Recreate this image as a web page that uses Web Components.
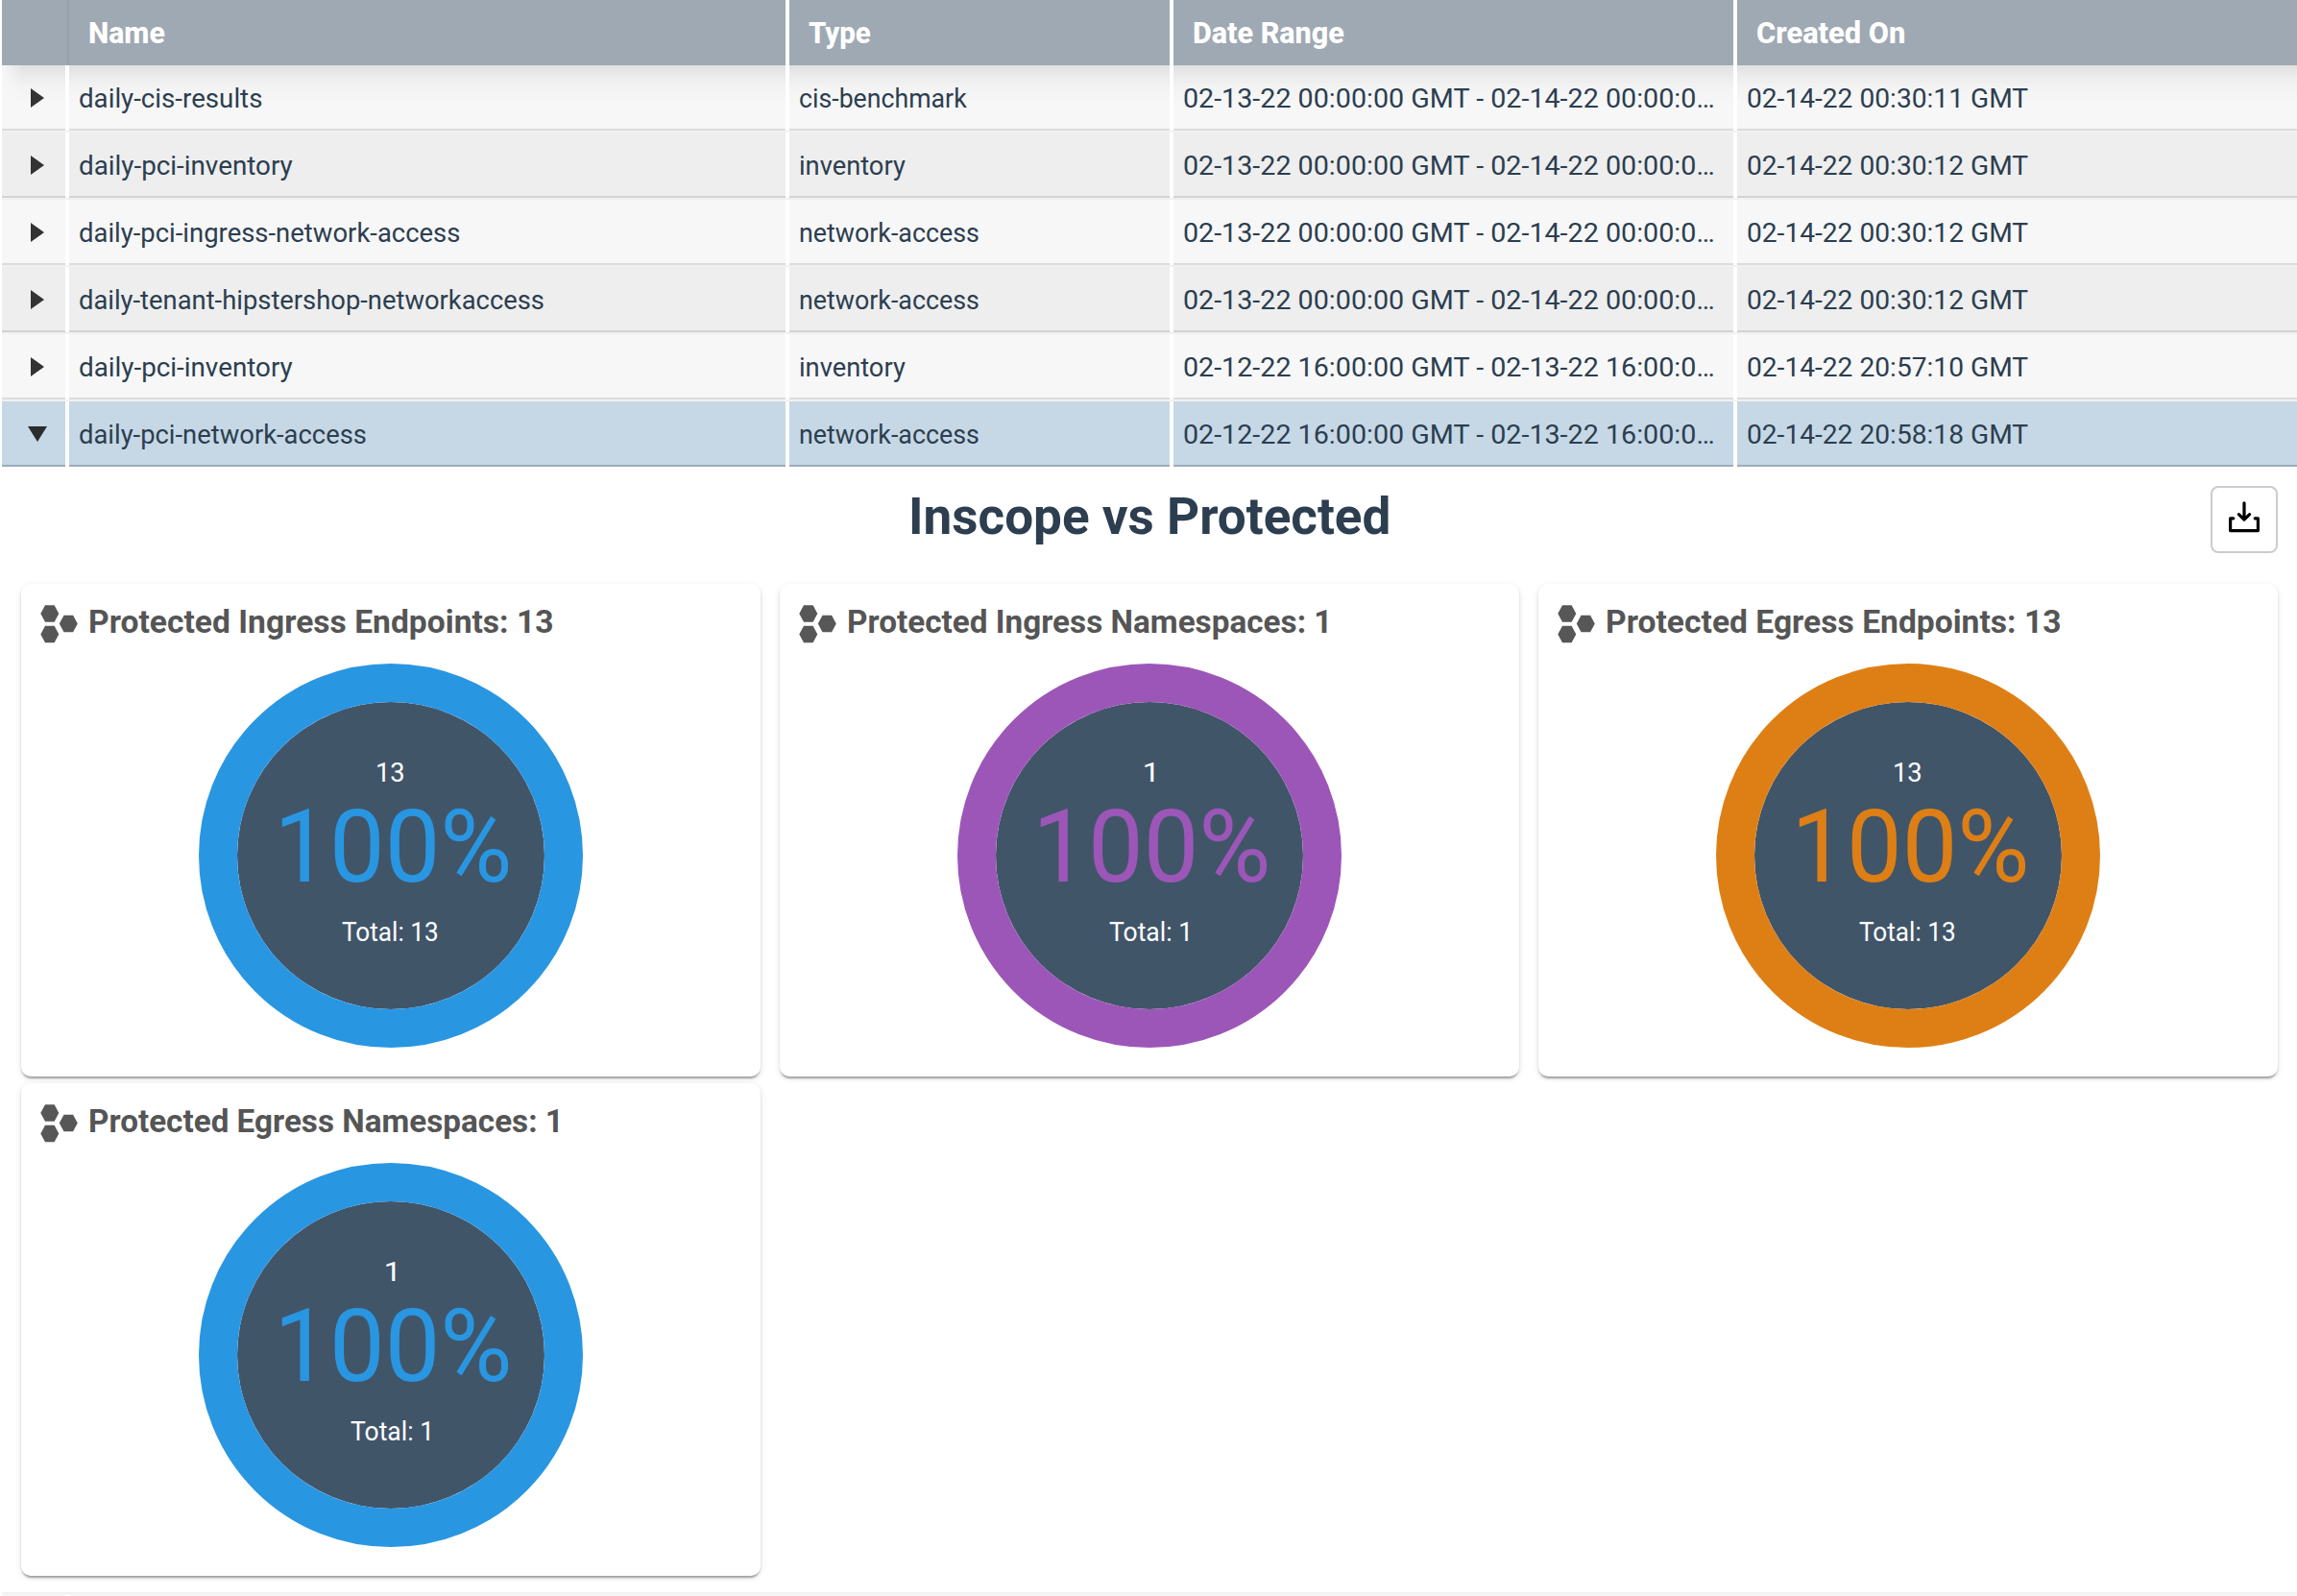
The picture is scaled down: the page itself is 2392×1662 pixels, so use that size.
<!DOCTYPE html>
<html lang="en">
<head>
<meta charset="utf-8">
<title>Reports</title>
<style>
html,body{margin:0;background:#fff;height:100%;overflow:hidden}
body{font-family:Roboto,"Open Sans",sans-serif;color:#2c3e50}
</style>
</head>
<body>
<report-page></report-page>
<script>
const pen = document.createElement('canvas').getContext('2d');

/* One line of text condensed or widened to a given ink width. */
class FitText extends HTMLElement {
  connectedCallback() {
    const size = +this.getAttribute('size'), w = +this.getAttribute('w'), weight = this.getAttribute('weight') || 400;
    const text = this.textContent;
    pen.font = `${weight} ${size}px Roboto`;
    const m = pen.measureText(text);
    const k = w / (m.actualBoundingBoxRight + m.actualBoundingBoxLeft);
    this.attachShadow({mode: 'open'}).innerHTML = `<style>
      :host{display:block;flex:none;width:${w}px;white-space:nowrap;font-size:${size}px;font-weight:${weight}}
      span{display:block;width:max-content;transform-origin:0 50%;transform:translateX(${m.actualBoundingBoxLeft * k}px) scaleX(${k})}
    </style><span><slot></slot></span>`;
  }
}

class GridHeader extends HTMLElement {
  connectedCallback() {
    this.attachShadow({mode: 'open'}).innerHTML = `<style>
      :host{display:block}
      .bar{display:grid;grid-template-columns:70px 746px 400px 587px 1fr;height:68px;margin-left:2px;line-height:40px;color:#fff}
      .bar>div{background:#9fa9b3;box-sizing:border-box;display:flex;align-items:center;padding:2px 0 0 21px;border-left:4px solid #fff}
      .bar>div:first-child{border:0;border-right:2px solid #98a2ac}
      .bar>div:nth-child(2){border:0}
      .bar>div:nth-child(3){padding-left:20px}
    </style><div class="bar"><div></div>
      <div><fit-text size="31" weight="800" w="79">Name</fit-text></div>
      <div><fit-text size="31" weight="800" w="65">Type</fit-text></div>
      <div><fit-text size="31" weight="800" w="157">Date Range</fit-text></div>
      <div><fit-text size="31" weight="800" w="153">Created On</fit-text></div></div>`;
  }
}

class GridRow extends HTMLElement {
  connectedCallback() {
    const [name, nw, type, tw, range, created] = this.getAttribute('cells').split('|');
    const open = this.hasAttribute('open');
    const marker = open
      ? '<svg width="20" height="16" viewBox="0 0 20 16"><path d="M0 0h20L10 16z" fill="#2a2c2e"/></svg>'
      : '<svg width="14" height="20" viewBox="0 0 14 20"><path d="M0 0l14 10L0 20z" fill="#333"/></svg>';
    this.attachShadow({mode: 'open'}).innerHTML = `<style>
      :host{display:block;margin-left:2px;border-top:2px solid #f1f1f1;--bg:#f7f7f7;--line:#dcdcdc}
      :host([first]){border-top:0}
      :host([alt]){--bg:#eee;--line:#d3d3d3}
      :host([open]){--bg:#c6d8e6;--line:#9eabb8}
      .r{display:grid;grid-template-columns:66px 746px 396px 583px 1fr;column-gap:4px;height:68px;line-height:40px}
      .r>div{background:var(--bg);border-bottom:2px solid var(--line);display:flex;align-items:center;padding:4px 0 0 11px}
      .r>div:first-child{padding:2px 0 0 8px;justify-content:center}
      :host([first]) .r>div{background:linear-gradient(#e0e0e0,#ebebeb 11px,#f3f3f3 23px,#f7f7f7 40px)}
      :host([first]) .r>div:first-child{background:linear-gradient(90deg,#f7f7f7,#f7f7f700 22px),linear-gradient(#e0e0e0,#ebebeb 11px,#f3f3f3 23px,#f7f7f7 40px)}
    </style><div class="r"><div>${marker}</div>
      <div><fit-text size="27" w="${nw}">${name}</fit-text></div>
      <div><fit-text size="27" w="${tw}">${type}</fit-text></div>
      <div><fit-text size="27" w="552">${range}</fit-text></div>
      <div><fit-text size="27" w="292">${created}</fit-text></div></div>`;
  }
}

class RingGauge extends HTMLElement {
  connectedCallback() {
    const n = this.getAttribute('count'), two = n.length > 1;
    this.attachShadow({mode: 'open'}).innerHTML = `<style>
      :host{display:flex;flex-direction:column;align-items:center;box-sizing:border-box;width:400px;height:400px;
        border:40px solid var(--ring);border-radius:50%;padding-top:54px;color:#fff;line-height:40px;
        background:#415569 padding-box}
      .pct{color:var(--ring);line-height:114px;padding-left:9px}
      .total{padding:12px 3px 0 0}
    </style>
    <fit-text size="27" w="${two ? 27.5 : 9.5}">${n}</fit-text>
    <div class="pct"><fit-text size="106" w="237">100%</fit-text></div>
    <div class="total"><fit-text size="27" w="${two ? 99.5 : 82}">Total: ${n}</fit-text></div>`;
  }
}

class StatCard extends HTMLElement {
  connectedCallback() {
    this.attachShadow({mode: 'open'}).innerHTML = `<style>
      :host{display:block;height:513px;border-radius:10px;background:#fff;
        box-shadow:0 4px 2px -2px rgba(0,0,0,.2),0 2px 2px rgba(0,0,0,.14),0 2px 6px rgba(0,0,0,.12)}
      .head{display:flex;align-items:center;height:83px;line-height:48px;color:#555;padding-left:20px}
      svg{display:block;margin-top:1px}
      .head fit-text{margin:-5px 0 0 13px}
      ring-gauge{margin-left:185px}
    </style><div class="head">
      <svg width="39" height="40" viewBox="0 0 39 40" fill="#575757">
        <path d="M5 .3h9.6l4.7 8.7-4.7 8.7H5L.3 9z"/>
        <path d="M24.5 10.8h9.6l4.7 8.7-4.7 8.7h-9.6l-4.7-8.7z"/>
        <path d="M5 21.8h9.6l4.7 8.7-4.7 8.7H5L.3 30.5z"/></svg>
      <fit-text size="34" weight="700" w="${this.getAttribute('w')}">${this.getAttribute('label')}</fit-text></div>
      <ring-gauge count="${this.getAttribute('count')}"></ring-gauge>`;
  }
}

class ReportDetail extends HTMLElement {
  connectedCallback() {
    this.attachShadow({mode: 'open'}).innerHTML = `<style>
      :host{display:block;box-sizing:border-box;height:1172px;padding:20px 20px 0 22px}
      header{display:grid;grid-template-columns:1fr auto 1fr;align-items:start;height:102px;line-height:64px}
      .title{grid-column:2}
      button{justify-self:end;box-sizing:border-box;width:70px;height:70px;border:2px solid #ccc;border-radius:8px;background:#fff;padding:0 0 6px;display:flex;align-items:center;justify-content:center}
      .cards{display:grid;grid-template-columns:repeat(3,770px);column-gap:20px;row-gap:7px}
    </style><header><div class="title"><fit-text size="54" weight="700" w="497">Inscope vs Protected</fit-text></div>
      <button aria-label="Download"><svg width="34" height="34" viewBox="0 0 34 34" fill="none" stroke="#000" stroke-width="3.2" stroke-linecap="round" stroke-linejoin="round">
        <path d="M17 2.8v17M11.4 14.7l5.6 5.4 5.6-5.4M5.8 18.8H2.6v12.8h28.8V18.8h-3.2"/></svg></button></header>
    <div class="cards">
      <stat-card style="--ring:#2996e2" label="Protected Ingress Endpoints: 13" w="481" count="13"></stat-card>
      <stat-card style="--ring:#9c56b8" label="Protected Ingress Namespaces: 1" w="498" count="1"></stat-card>
      <stat-card style="--ring:#de7f15" label="Protected Egress Endpoints: 13" w="471" count="13"></stat-card>
      <stat-card style="--ring:#2996e2" label="Protected Egress Namespaces: 1" w="487.5" count="1"></stat-card>
    </div>`;
  }
}

class ReportPage extends HTMLElement {
  connectedCallback() {
    const a = '02-13-22 00:00:00 GMT - 02-14-22 00:00:0…', b = '02-12-22 16:00:00 GMT - 02-13-22 16:00:0…';
    const row = (attrs, ...c) => `<grid-row ${attrs} cells="${c.join('|')}"></grid-row>`;
    this.attachShadow({mode: 'open'}).innerHTML = `<style>
      :host{display:block;width:2392px;height:1662px;overflow:hidden}
      .next{display:grid;grid-template-columns:66px 1fr;column-gap:4px;height:2px;margin-left:2px;border-top:2px solid #f1f1f1}
      .next i{background:#f7f7f7}
    </style><grid-header></grid-header>`
    + row('first', 'daily-cis-results', 189.5, 'cis-benchmark', 174, a, '02-14-22 00:30:11 GMT')
    + row('alt', 'daily-pci-inventory', 222, 'inventory', 110, a, '02-14-22 00:30:12 GMT')
    + row('', 'daily-pci-ingress-network-access', 395.5, 'network-access', 186, a, '02-14-22 00:30:12 GMT')
    + row('alt', 'daily-tenant-hipstershop-networkaccess', 483, 'network-access', 186, a, '02-14-22 00:30:12 GMT')
    + row('', 'daily-pci-inventory', 222, 'inventory', 110, b, '02-14-22 20:57:10 GMT')
    + row('open', 'daily-pci-network-access', 298, 'network-access', 186, b, '02-14-22 20:58:18 GMT')
    + `<report-detail></report-detail><div class="next"><i></i><i></i></div>`;
  }
}

customElements.define('fit-text', FitText);
customElements.define('grid-header', GridHeader);
customElements.define('grid-row', GridRow);
customElements.define('ring-gauge', RingGauge);
customElements.define('stat-card', StatCard);
customElements.define('report-detail', ReportDetail);
customElements.define('report-page', ReportPage);
</script>
</body>
</html>
